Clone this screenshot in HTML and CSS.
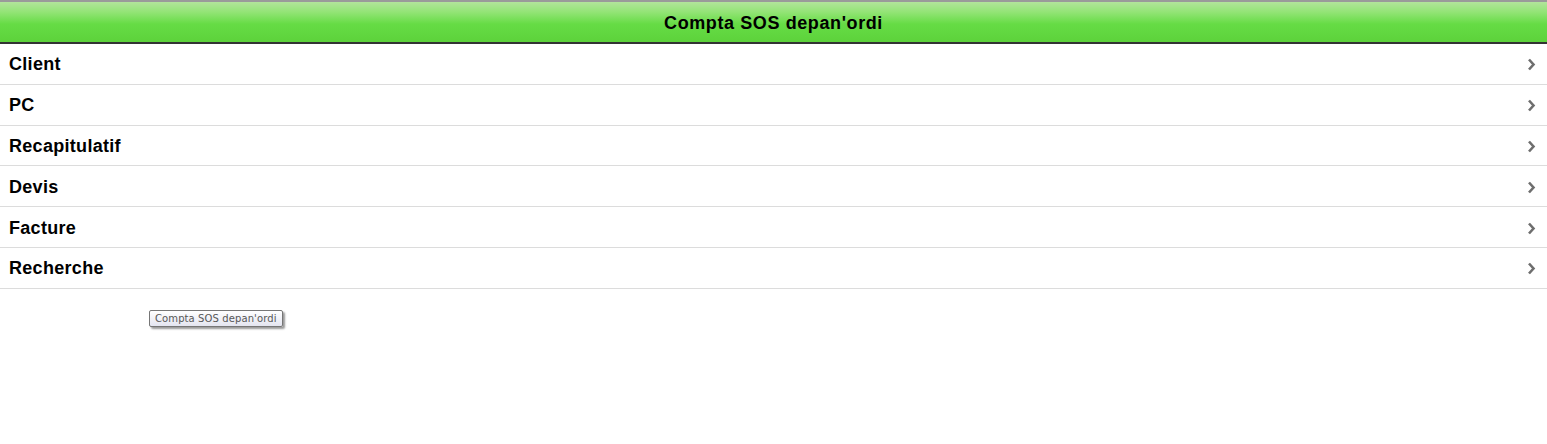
FILE: index.html
```html
<!DOCTYPE html>
<html lang="fr">
<head>
  <meta charset="UTF-8" />
  <meta name="viewport" content="width=device-width, initial-scale=1.0">
  <title>Compta SOS depan'ordi</title>
  <link rel="stylesheet" href="styles.css">
</head>
<body>
  <div class="page">
    <div class="header">
      <h1>Compta SOS depan'ordi</h1>
    </div>

    <ul class="listview">
      <li><a href="#">Client<span class="arrow"><svg width="9" height="13" viewBox="0 0 9 13"><path d="M2 1.5 L6.5 6.5 L2 11.5" /></svg></span></a></li>
      <li><a href="#">PC<span class="arrow"><svg width="9" height="13" viewBox="0 0 9 13"><path d="M2 1.5 L6.5 6.5 L2 11.5" /></svg></span></a></li>
      <li><a href="#">Recapitulatif<span class="arrow"><svg width="9" height="13" viewBox="0 0 9 13"><path d="M2 1.5 L6.5 6.5 L2 11.5" /></svg></span></a></li>
      <li><a href="#">Devis<span class="arrow"><svg width="9" height="13" viewBox="0 0 9 13"><path d="M2 1.5 L6.5 6.5 L2 11.5" /></svg></span></a></li>
      <li><a href="#">Facture<span class="arrow"><svg width="9" height="13" viewBox="0 0 9 13"><path d="M2 1.5 L6.5 6.5 L2 11.5" /></svg></span></a></li>
      <li><a href="#">Recherche<span class="arrow"><svg width="9" height="13" viewBox="0 0 9 13"><path d="M2 1.5 L6.5 6.5 L2 11.5" /></svg></span></a></li>
    </ul>

    <div class="tooltip">Compta SOS depan'ordi</div>
  </div>
</body>
</html>
```

FILE: styles.css
```css
* {
  margin: 0;
  padding: 0;
  box-sizing: border-box;
}
body {
  font-family: 'Liberation Sans', Arial, sans-serif;
  background: #ffffff;
  color: #000;
}
.page {
  position: relative;
  min-height: 444px;
}
.header {
  height: 44px;
  padding-top: 3px;
  border-top: 2px solid #9a9a9a;
  border-bottom: 2px solid #333333;
  background: linear-gradient(to bottom, #b2e49b 0%, #93e476 25%, #66dc45 55%, #5dd23b 100%);
  display: flex;
  align-items: center;
  justify-content: center;
}
.header h1 {
  font-size: 18px;
  font-weight: bold;
  letter-spacing: 0.6px;
  color: #000;
}
.listview {
  list-style: none;
}
.listview li {
  border-bottom: 1px solid #dcdcdc;
}
.listview li a {
  height: 39.8px;
  display: flex;
  align-items: center;
  justify-content: space-between;
  padding: 2px 11px 0 9px;
  color: #000;
  text-decoration: none;
  font-size: 18px;
  font-weight: bold;
  letter-spacing: 0.3px;
}
.listview .arrow {
  display: flex;
}
.listview .arrow path {
  fill: none;
  stroke: #6e6e6e;
  stroke-width: 2.6;
}
.tooltip {
  position: absolute;
  left: 149px;
  top: 310px;
  padding: 2px 5px 2px 5px;
  font-family: 'DejaVu Sans', sans-serif;
  font-size: 10px;
  letter-spacing: 0.1px;
  color: #575757;
  background: linear-gradient(to bottom, #ffffff, #e4e5f0);
  border: 1px solid #767676;
  border-radius: 2px;
  box-shadow: 2px 2px 2px rgba(0, 0, 0, 0.4);
}
```
